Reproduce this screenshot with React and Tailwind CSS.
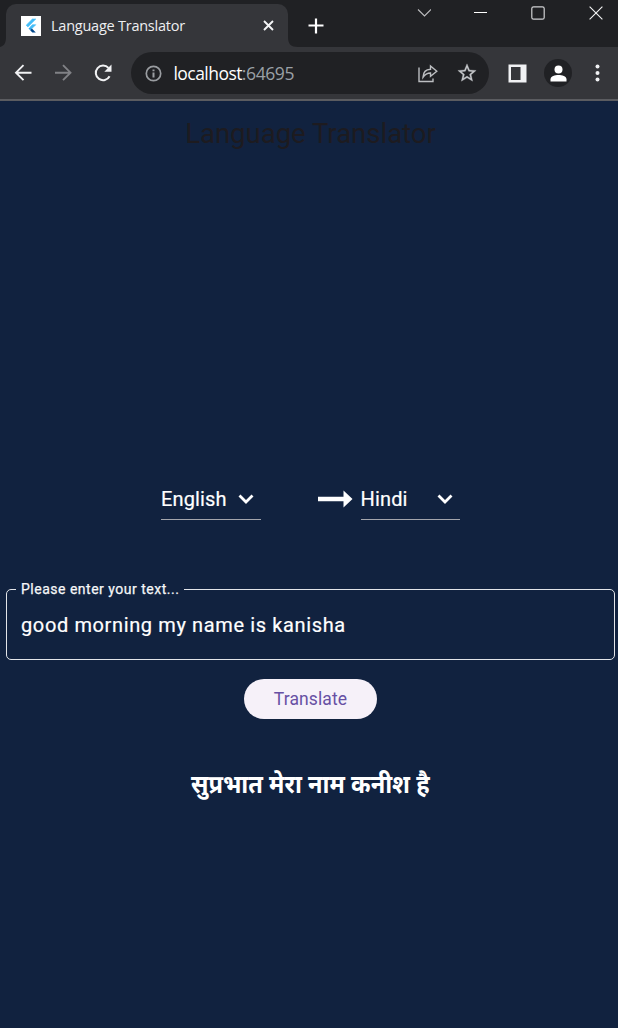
import React from 'react';

function FlutterLogo() {
  return (
    <svg className="h-5 w-5 shrink-0 bg-white" viewBox="0 0 20 20">
      <path d="M11.4 3h3.400L6.900 10.900 5.200 9.200z" fill="#43bdf8" stroke="#43bdf8" strokeWidth=".6" />
      <path d="M11.400 8.700h3.400l-3.900 3.900-1.700-1.700z" fill="#43bdf8" stroke="#43bdf8" strokeWidth=".6" />
      <path d="M7.500 12.600l1.700-1.700 1.700 1.700-1.700 1.700z" fill="#29a8f0" />
      <path d="M9.200 14.300l1.700-1.700 3.900 3.900h-3.400z" fill="#01478b" />
    </svg>
  );
}

function TabStrip() {
  return (
    <div className="flex h-[47px] bg-[#202124]">
      <svg className="mt-[37px] h-[10px] w-[6px] shrink-0" viewBox="0 0 6 10">
        <path d="M6 0C6 6 4 9 0 10H6z" fill="#35363a" />
      </svg>
      <div className="mt-[4px] flex h-[43px] w-[282px] items-center rounded-t-[10px] bg-[#35363a] pl-[15px]">
        <FlutterLogo />
        <span className="ml-[10px] w-[212px] whitespace-nowrap font-['Open_Sans',sans-serif] text-[14.5px] leading-5 tracking-[-0.24px] text-[#eeeff1]">
          Language Translator
        </span>
        <svg className="h-[11px] w-[11px]" viewBox="0 0 11 11" stroke="#f4f5f6" strokeWidth="1.9">
          <path d="M1 1l9 9M10 1l-9 9" />
        </svg>
      </div>
      <svg className="mt-[37px] h-[10px] w-[10px] shrink-0" viewBox="0 0 10 10">
        <path d="M0 0C0 7 3 10 10 10H0z" fill="#35363a" />
      </svg>
      <svg className="mt-[18px] ml-[10px] h-4 w-4" viewBox="0 0 16 16" stroke="#fff" strokeWidth="2.2">
        <path d="M8 .5v15M.5 7.500h15" />
      </svg>
      <div className="ml-[93px] flex h-[26px] items-center">
        <svg className="h-[14px] w-[14px]" viewBox="0 0 14 14" fill="none" stroke="#bcbdbf" strokeWidth="1.1">
          <path d="M1 3.500L7.500 10 14 3.500" />
        </svg>
        <svg className="ml-[43px] h-[14px] w-[14px]" viewBox="0 0 14 14" stroke="#fff" strokeWidth="1">
          <path d="M0 6.500h13" />
        </svg>
        <svg className="ml-[43px] h-[14px] w-[14px]" viewBox="0 0 14 14" fill="none" stroke="#d0d1d3" strokeWidth="1.2">
          <rect x=".8" y=".8" width="12.400" height="12.400" rx="1.800" />
        </svg>
        <svg className="ml-[43.500px] h-[14px] w-[14px]" viewBox="0 0 14 14" stroke="#f1f1f2" strokeWidth="1.150">
          <path d="M.6.600l12.800 12.800M13.400.600L.6 13.400" />
        </svg>
      </div>
    </div>
  );
}

function Toolbar() {
  return (
    <div className="flex h-[54px] items-center border-b-2 border-[#5b5c60] bg-[#35363a] pl-[14px]">
      <svg className="h-[18px] w-[18px] shrink-0" viewBox="0 0 18 18" fill="none" stroke="#f1f2f4" strokeWidth="1.900">
        <path d="M17.500 8.700H2.500M9.500 1.200L2 8.700l7.500 7.500" />
      </svg>
      <svg className="ml-[22px] h-[18px] w-[18px] shrink-0" viewBox="0 0 18 18" fill="none" stroke="#818286" strokeWidth="1.900">
        <path d="M1 8.700h15M9 1.200l7.500 7.500L9 16.200" />
      </svg>
      <svg className="ml-[21px] h-[20px] w-[20px] shrink-0" viewBox="0 0 20 20">
        <path d="M16.600 13.200A7.300 7.300 0 1 1 15.500 4.900" fill="none" stroke="#f1f2f4" strokeWidth="2" />
        <path d="M18.500 1.500v7.200h-7.200z" fill="#f1f2f4" />
      </svg>
      <div className="ml-[18px] flex h-[42px] w-[358px] shrink-0 items-center rounded-full bg-[#202124] pl-[14px]">
        <svg className="h-[17px] w-[17px]" viewBox="0 0 17 17" fill="none" stroke="#9a9da1" strokeWidth="1.700">
          <circle cx="8.500" cy="8.500" r="7.200" />
          <path d="M8.500 7.500v5M8.500 4.500v1.800" strokeWidth="2" />
        </svg>
        <span className="ml-[11.500px] w-[244px] whitespace-nowrap font-['Open_Sans',sans-serif] text-[17.500px] leading-6 tracking-[-0.4px] text-[#9aa0a6]">
          <span className="tracking-[-0.550px] text-white">localhost</span>:64695
        </span>
        <svg className="h-[20px] w-[20px]" viewBox="0 0 20 20" fill="none" stroke="#bcbec1" strokeWidth="1.400">
          <path d="M1 4.500V18.500h14v-3M5 14.300c.2-5.500 2.500-7.800 7.500-8V3L18.800 8.300l-6.300 5V10c-3.500 0-5.500 1.200-7.500 4.300z" />
        </svg>
        <svg className="ml-[18.500px] h-[22px] w-[22px]" viewBox="0 0 24 24" fill="#c5c7ca" stroke="#c5c7ca" strokeWidth=".3">
          <path d="M22 9.240l-7.190-.62L12 2 9.190 8.630 2 9.240l5.460 4.730L5.820 21 12 17.270 18.180 21l-1.630-7.030zM12 15.400l-3.760 2.270 1-4.280-3.320-2.880 4.380-.38L12 6.100l1.710 4.040 4.380.38-3.320 2.880 1 4.280z" />
        </svg>
      </div>
      <svg className="ml-[19px] h-[19px] w-[19px] shrink-0" viewBox="0 0 19 19">
        <path d="M.5.500h18v18H.5zM3 3v13h9.500V3z" fill="#f1f2f4" fillRule="evenodd" />
      </svg>
      <div className="ml-[17px] flex h-7 w-7 shrink-0 items-center justify-center rounded-full bg-[#202124]">
        <svg className="h-[17px] w-[17px]" viewBox="0 0 17 17" fill="#fff">
          <circle cx="8.500" cy="4.500" r="4" />
          <path d="M.5 16.500v-2.300C.5 11.300 5 10 8.500 10s8 1.300 8 4.200v2.300z" />
        </svg>
      </div>
      <svg className="ml-[23px] h-[18px] w-[5px] shrink-0" viewBox="0 0 5 18" fill="#f1f2f4">
        <circle cx="2.500" cy="2.500" r="2" />
        <circle cx="2.500" cy="9" r="2" />
        <circle cx="2.500" cy="15.500" r="2" />
      </svg>
    </div>
  );
}

function LanguageSelect({ value }) {
  return (
    <button className="flex h-[42px] w-[99.500px] items-center justify-between border-b border-[#a3a5ac] pr-[7px] text-left">
      <span className="text-[20px] leading-6 tracking-[0.150px] [-webkit-text-stroke:0.200px_white]">{value}</span>
      <svg className="h-[10px] w-[16px]" viewBox="0 0 16 10" fill="none" stroke="#fff" strokeWidth="2.800">
        <path d="M1.500 1.500L8 8l6.500-6.500" />
      </svg>
    </button>
  );
}

export default function App() {
  return (
    <div className="flex h-[1028px] w-[618px] flex-col overflow-hidden bg-[#11223f] font-['Roboto',sans-serif] text-white">
      <TabStrip />
      <Toolbar />
      <main className="flex flex-1 flex-col items-center">
        <h1 className="mt-[16px] ml-[3px] whitespace-nowrap text-[27.500px] leading-[34px] text-[#1d1b20]">
          Language Translator
        </h1>
        <div className="mt-[327px] ml-[3px] flex">
          <LanguageSelect value="English" />
          <svg className="mt-[12px] mr-[7.500px] ml-[57.500px] h-[18px] w-[35px]" viewBox="0 0 35 18" fill="#fff">
            <path d="M0 6.700h25.500V.500L34.500 9l-9 8.500v-6.200H0z" />
          </svg>
          <LanguageSelect value="Hindi" />
        </div>
        <fieldset className="mt-[59px] ml-[3px] h-[80.500px] w-[609px] rounded-[5px] border-[1.250px] border-[#e3e5e9] pl-[9px]">
          <legend className="h-[20px] pr-[5px] pl-[5px] text-[14px] leading-[20px] tracking-[0.500px] whitespace-nowrap text-[#f6f7f8] [-webkit-text-stroke:0.250px_#f6f7f8]">
            Please enter your text...
          </legend>
          <p className="mt-[14px] pl-[5px] text-[20px] leading-[24px] tracking-[0.625px] whitespace-nowrap [-webkit-text-stroke:0.200px_white]">
            good morning my name is kanisha
          </p>
        </fieldset>
        <button className="mt-[19.500px] ml-[3px] h-[40px] w-[133.500px] rounded-full bg-[#f6f1f9] pt-[1px] text-[17.500px] tracking-[0.120px] text-[#6750a4]">
          Translate
        </button>
        <p className="mt-[45px] ml-[3px] scale-x-[0.945] text-[25px] leading-[38px] font-bold whitespace-nowrap font-['Noto_Sans','Noto_Sans_Devanagari',sans-serif]">
          सुप्रभात मेरा नाम कनीश है
        </p>
      </main>
    </div>
  );
}
